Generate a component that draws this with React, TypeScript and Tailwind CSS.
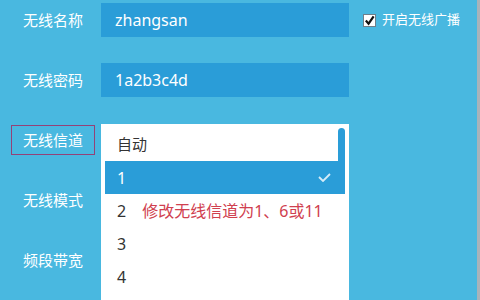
const font = { fontFamily: '"Noto Sans", "Noto Sans CJK SC", sans-serif' }

function Label({ text, marked }: { text: string; marked?: boolean }) {
  return (
    <div className="w-[101px] shrink-0">
      <div
        className={
          'ml-[11px] w-[84px] h-[30px] flex items-center justify-center text-[15px] text-white ' +
          (marked ? 'border border-[#934278]' : '')
        }
      >
        {text}
      </div>
    </div>
  )
}

function Field({ value }: { value: string }) {
  return (
    <div className="w-[248px] h-[34px] bg-[#2a9dd8] flex items-center px-[14px] text-[16px] text-white">
      {value}
    </div>
  )
}

const channels = ['自动', '1', '2', '3', '4']

export default function App() {
  return (
    <div className="w-[480px] h-[300px] overflow-hidden flex bg-[#49b8e0]" style={font}>
      <div className="flex-1 flex flex-col gap-[26px] pt-[3px]">
        <div className="h-[34px] flex items-center">
          <Label text="无线名称" />
          <Field value="zhangsan" />
          <label className="ml-[14px] flex items-center gap-[6px] text-[13px] text-white">
            <span className="w-[13px] h-[13px] bg-white border border-[#6f7f8a] flex items-center justify-center">
              <svg width="11" height="11" viewBox="0 0 12 12">
                <polyline points="2,6 5,9.5 10.5,1.5" fill="none" stroke="#111" strokeWidth="2.4" />
              </svg>
            </span>
            开启无线广播
          </label>
        </div>

        <div className="h-[34px] flex items-center">
          <Label text="无线密码" />
          <Field value="1a2b3c4d" />
        </div>

        <div className="h-[34px] flex items-center">
          <Label text="无线信道" marked />
          <div className="relative w-[248px] h-[34px]">
            <div className="absolute left-0 top-[1px] w-[248px] h-[180px] bg-white px-[4px] pt-[4px]">
              <div className="absolute right-[4px] top-[4px] w-[7px] h-[65px] rounded-t-[4px] bg-[#2a9dd8]" />
              {channels.map((c) => {
                const active = c === '1'
                return (
                  <div
                    key={c}
                    className={
                      'relative h-[33px] flex items-center pl-[12px] pr-[14px] ' +
                      (c === '自动' ? 'text-[15px] ' : 'text-[16px] ') +
                      (active ? 'bg-[#2a9dd8] text-white' : 'text-[#333]')
                    }
                  >
                    <span>{c}</span>
                    {c === '2' && (
                      <span className="ml-[16px] text-[16px] text-[#d0404f]">修改无线信道为1、6或11</span>
                    )}
                    {active && (
                      <svg className="ml-auto" width="13" height="9" viewBox="0 0 13 9">
                        <polyline points="1,4 5,8 12,1" fill="none" stroke="#d6ecf8" strokeWidth="1.8" />
                      </svg>
                    )}
                  </div>
                )
              })}
            </div>
          </div>
        </div>

        <div className="h-[34px] flex items-center">
          <Label text="无线模式" />
        </div>

        <div className="h-[34px] flex items-center">
          <Label text="频段带宽" />
        </div>
      </div>
      <div className="w-[3px] bg-[#a9b3ba]" />
    </div>
  )
}
